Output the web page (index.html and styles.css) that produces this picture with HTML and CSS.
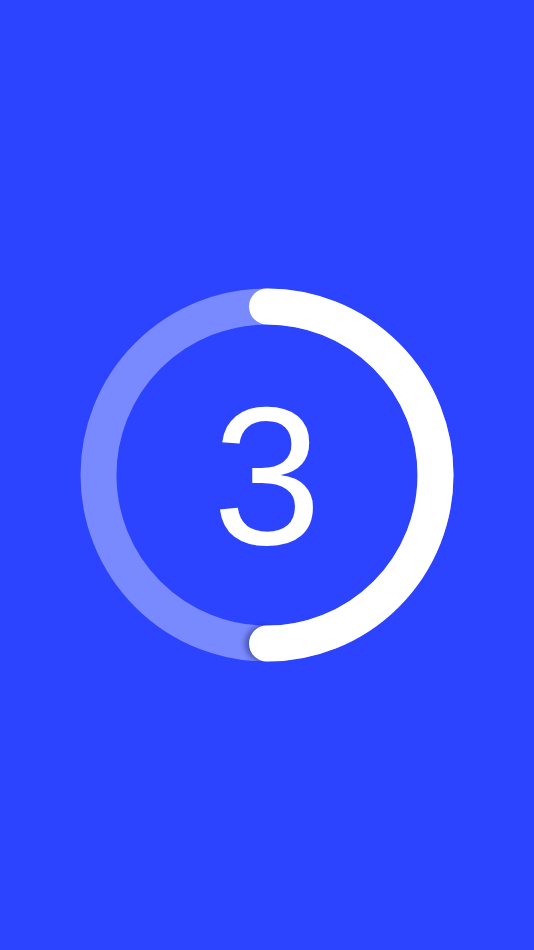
FILE: index.html
```html
<!DOCTYPE html>
<html>
<head>
<meta charset="utf-8">
<link rel="stylesheet" href="styles.css">
</head>
<body>
<main class="screen">
  <div class="timer">
    <svg class="ring" width="374" height="374" viewBox="0 0 374 374">
      <defs>
        <filter id="capShadow" x="-100%" y="-100%" width="300%" height="300%">
          <feGaussianBlur stdDeviation="3"/>
        </filter>
      </defs>
      <circle class="track" cx="187" cy="187" r="168.5"/>
      <circle class="cap-shadow" cx="183" cy="355.5" r="17" filter="url(#capShadow)"/>
      <path class="progress" d="M187 18.5 A168.5 168.5 0 0 1 187 355.5"/>
    </svg>
    <div class="count">3</div>
  </div>
</main>
</body>
</html>
```
FILE: styles.css
```css
html, body {
  margin: 0;
  padding: 0;
  background: #2c44ff;
}
.screen {
  width: 534px;
  height: 950px;
  display: flex;
  align-items: center;
  justify-content: center;
  background: #2c44ff;
}
.timer {
  position: relative;
  width: 374px;
  height: 374px;
  display: flex;
  align-items: center;
  justify-content: center;
}
.ring {
  position: absolute;
  left: 0;
  top: 0;
}
.track {
  fill: none;
  stroke: rgba(255, 255, 255, 0.37);
  stroke-width: 36;
}
.cap-shadow {
  fill: rgba(10, 20, 90, 0.55);
}
.progress {
  fill: none;
  stroke: #ffffff;
  stroke-width: 36;
  stroke-linecap: round;
}
.count {
  position: relative;
  font-family: "Liberation Sans", Arial, sans-serif;
  font-size: 196px;
  line-height: 1;
  color: #ffffff;
  margin-top: 4px;
}
```
